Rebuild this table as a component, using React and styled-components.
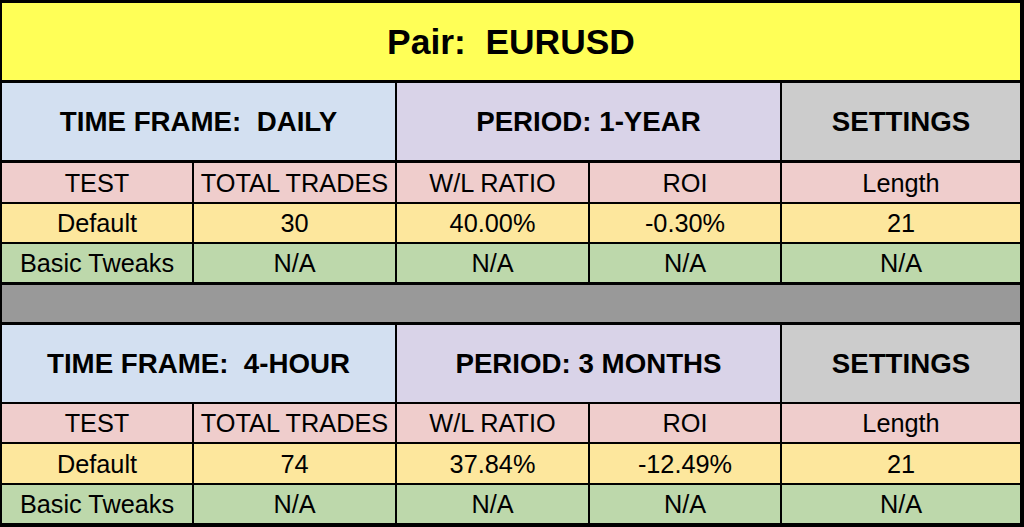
import React from "react";
import styled, { createGlobalStyle } from "styled-components";

const GlobalStyle = createGlobalStyle`
  html, body {
    margin: 0;
    padding: 0;
    background: #000;
  }
  body {
    font-family: "Liberation Sans", Arial, sans-serif;
  }
`;

const COLORS = {
  header: "#ffff57",
  frame: "#d3e0f1",
  period: "#d9d3e8",
  settings: "#cccccc",
  label: "#efcdcc",
  base: "#fde79d",
  tweak: "#bdd8ab",
  spacer: "#999999",
};

const blocks = [
  {
    frame: "TIME FRAME:  DAILY",
    period: "PERIOD: 1-YEAR",
    heights: [77, 39, 38, 38],
    rows: [
      ["Default", "30", "40.00%", "-0.30%", "21"],
      ["Basic Tweaks", "N/A", "N/A", "N/A", "N/A"],
    ],
  },
  {
    frame: "TIME FRAME:  4-HOUR",
    period: "PERIOD: 3 MONTHS",
    heights: [77, 38, 39, 38],
    rows: [
      ["Default", "74", "37.84%", "-12.49%", "21"],
      ["Basic Tweaks", "N/A", "N/A", "N/A", "N/A"],
    ],
  },
];

const labels = ["TEST", "TOTAL TRADES", "W/L RATIO", "ROI", "Length"];

function App() {
  return (
    <>
      <GlobalStyle />
      <Sheet>
        <Row $h={77}>
          <HeaderCell>Pair:  EURUSD</HeaderCell>
        </Row>
        {blocks.map((block, i) => (
          <React.Fragment key={block.frame}>
            {i > 0 && (
              <Row $h={37} $thick>
                <Cell $bg={COLORS.spacer} $span={5} />
              </Row>
            )}
            <Row $h={block.heights[0]} $thick>
              <TitleCell $bg={COLORS.frame} $span={2}>
                {block.frame}
              </TitleCell>
              <TitleCell $bg={COLORS.period} $span={2}>
                {block.period}
              </TitleCell>
              <TitleCell $bg={COLORS.settings}>SETTINGS</TitleCell>
            </Row>
            <Row $h={block.heights[1]} $thick={i === 0}>
              {labels.map((l) => (
                <Cell key={l} $bg={COLORS.label}>
                  {l}
                </Cell>
              ))}
            </Row>
            {block.rows.map((r, j) => (
              <Row key={j} $h={block.heights[j + 2]}>
                {r.map((v, k) => (
                  <Cell key={k} $bg={j === 0 ? COLORS.base : COLORS.tweak}>
                    {v}
                  </Cell>
                ))}
              </Row>
            ))}
          </React.Fragment>
        ))}
      </Sheet>
    </>
  );
}

export default App;

const Sheet = styled.div`
  display: flex;
  flex-direction: column;
  gap: 2px;
  width: 1024px;
  height: 527px;
  box-sizing: border-box;
  padding: 3px 4px 4px 2px;
  background: #000;
  overflow: hidden;
`;

const Row = styled.div`
  display: grid;
  grid-template-columns: 190px 201px 191px 190px 238px;
  column-gap: 2px;
  height: ${(p) => p.$h}px;
  flex-shrink: 0;
  margin-top: ${(p) => (p.$thick ? "1px" : "0")};
`;

const Cell = styled.div`
  grid-column: span ${(p) => p.$span || 1};
  display: flex;
  align-items: center;
  justify-content: center;
  padding-top: 1px;
  background: ${(p) => p.$bg};
  color: #000;
  font-size: 25.3px;
  white-space: pre;
  overflow: hidden;
`;

const TitleCell = styled(Cell)`
  font-size: 27.7px;
  font-weight: 700;
`;

const HeaderCell = styled(Cell)`
  grid-column: span 5;
  background: ${COLORS.header};
  font-size: 35.4px;
  font-weight: 700;
  padding-top: 2px;
`;
